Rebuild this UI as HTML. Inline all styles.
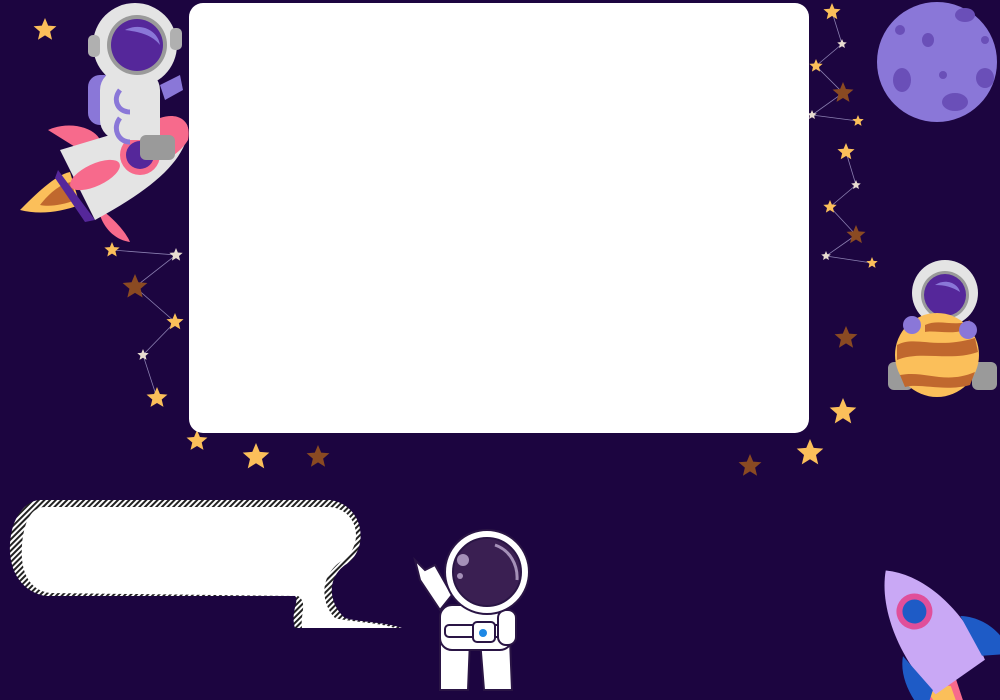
<!DOCTYPE html>
<html><head><style>
html,body{margin:0;padding:0;background:#1c0540;width:1000px;height:700px;overflow:hidden}
svg{display:block;position:absolute;left:0;top:0}
</style></head><body>
<svg width="1000" height="700" viewBox="0 0 1000 700" xmlns="http://www.w3.org/2000/svg">
<defs>
<path id="s" d="M0,-10 L2.65,-3.64 9.51,-3.09 4.28,1.39 5.88,8.09 0,4.5 -5.88,8.09 -4.28,1.39 -9.51,-3.09 -2.65,-3.64Z"/>
<pattern id="h" width="4" height="4" patternUnits="userSpaceOnUse" patternTransform="rotate(45)"><rect width="4" height="4" fill="#fff"/><rect width="2" height="4" fill="#222"/></pattern>
</defs>
<rect width="1000" height="700" fill="#1c0540"/>
<g stroke="#8a7fb0" stroke-width="0.8" fill="none">
<polyline points="112,250 176,255 135,287 175,322 143,355 157,398"/>
<polyline points="832,12 842,44 816,66 843,93 812,115 858,121"/>
<polyline points="846,152 856,185 830,207 856,235 826,256 872,263"/>
</g>
<g fill="#fbbf5a">
<use href="#s" transform="translate(45,30) scale(1.2)"/>
<use href="#s" transform="translate(112,250) scale(0.8)"/>
<use href="#s" transform="translate(175,322) scale(0.9)"/>
<use href="#s" transform="translate(157,398) scale(1.1)"/>
<use href="#s" transform="translate(197,441) scale(1.1)"/>
<use href="#s" transform="translate(256,457) scale(1.4)"/>
<use href="#s" transform="translate(832,12) scale(0.9)"/>
<use href="#s" transform="translate(816,66) scale(0.7)"/>
<use href="#s" transform="translate(858,121) scale(0.6)"/>
<use href="#s" transform="translate(846,152) scale(0.9)"/>
<use href="#s" transform="translate(830,207) scale(0.7)"/>
<use href="#s" transform="translate(872,263) scale(0.6)"/>
<use href="#s" transform="translate(843,412) scale(1.4)"/>
<use href="#s" transform="translate(810,453) scale(1.4)"/>
</g>
<g fill="#e8dcd0">
<use href="#s" transform="translate(176,255) scale(0.7)"/>
<use href="#s" transform="translate(143,355) scale(0.6)"/>
<use href="#s" transform="translate(842,44) scale(0.5)"/>
<use href="#s" transform="translate(812,115) scale(0.5)"/>
<use href="#s" transform="translate(856,185) scale(0.5)"/>
<use href="#s" transform="translate(826,256) scale(0.5)"/>
</g>
<g fill="#8a4a22">
<use href="#s" transform="translate(135,287) scale(1.3)"/>
<use href="#s" transform="translate(318,457) scale(1.2)"/>
<use href="#s" transform="translate(843,93) scale(1.1)"/>
<use href="#s" transform="translate(856,235) scale(1.0)"/>
<use href="#s" transform="translate(846,338) scale(1.2)"/>
<use href="#s" transform="translate(750,466) scale(1.2)"/>
</g>
<rect x="189" y="3" width="620" height="430" rx="14" fill="#fff"/>
<g>
<path d="M20,210 C35,195 55,175 70,172 L80,205 C60,212 40,215 20,210Z" fill="#fbbf5a"/>
<path d="M40,205 C50,192 62,183 72,182 L76,200 C62,205 50,207 40,205Z" fill="#c0682e"/>
<path d="M48,130 C70,120 95,128 100,140 L80,150Z" fill="#f76a8c"/>
<path d="M95,205 C110,215 125,230 130,242 C115,240 104,228 100,215Z" fill="#f76a8c"/>
<path d="M60,150 L160,120 C180,115 190,120 188,135 C180,165 150,190 95,220 Z" fill="#e4e4e4"/>
<path d="M58,170 L95,220 L85,222 L55,178Z" fill="#55279a"/>
<ellipse cx="95" cy="175" rx="27" ry="11" transform="rotate(-25 95 175)" fill="#f76a8c"/>
<path d="M160,118 C178,112 192,120 188,140 C182,150 170,160 160,160Z" fill="#f76a8c"/>
<circle cx="140" cy="155" r="20" fill="#f76a8c"/><circle cx="140" cy="155" r="14" fill="#55279a"/>
<rect x="88" y="75" width="28" height="50" rx="12" fill="#8a77d8"/>
<rect x="100" y="70" width="60" height="70" rx="20" fill="#e4e4e4"/>
<path d="M120,90 C112,100 118,112 130,112" stroke="#8a77d8" stroke-width="5" fill="none"/>
<path d="M120,118 C112,128 118,142 130,142" stroke="#8a77d8" stroke-width="5" fill="none"/>
<path d="M160,85 L180,75 L183,90 L165,100Z" fill="#8a77d8"/>
<rect x="140" y="135" width="35" height="25" rx="6" fill="#9a9a9a"/>
<circle cx="135" cy="45" r="42" fill="#e4e4e4"/>
<rect x="88" y="35" width="12" height="22" rx="5" fill="#b0b0b0"/>
<rect x="170" y="28" width="12" height="22" rx="5" fill="#b0b0b0"/>
<circle cx="137" cy="45" r="30" fill="#9a9a9a"/>
<circle cx="137" cy="45" r="26" fill="#55279a"/>
<path d="M125,30 C140,22 158,30 160,45 C152,35 140,32 125,30Z" fill="#8a77d8"/>
</g>
<circle cx="937" cy="62" r="60" fill="#8a77d8"/>
<g fill="#6a4fb8">
<ellipse cx="902" cy="80" rx="9" ry="12"/><ellipse cx="955" cy="102" rx="13" ry="9"/>
<ellipse cx="985" cy="78" rx="9" ry="10"/><ellipse cx="928" cy="40" rx="6" ry="7"/>
<ellipse cx="965" cy="15" rx="10" ry="7"/><ellipse cx="900" cy="30" rx="5" ry="5"/>
<ellipse cx="943" cy="75" rx="4" ry="4"/><ellipse cx="985" cy="40" rx="4" ry="4"/>
</g>
<g>
<circle cx="945" cy="293" r="33" fill="#e4e4e4"/>
<circle cx="945" cy="295" r="24" fill="#9a9a9a"/>
<circle cx="945" cy="295" r="21" fill="#55279a"/>
<path d="M935,285 C945,278 958,283 960,292 C952,287 945,285 935,285Z" fill="#8a77d8"/>
<rect x="888" y="362" width="25" height="28" rx="6" fill="#9a9a9a"/>
<rect x="972" y="362" width="25" height="28" rx="6" fill="#9a9a9a"/>
<circle cx="937" cy="355" r="42" fill="#fbbf5a"/>
<path d="M897,345 C915,335 935,350 975,338 L978,352 C950,362 920,350 897,360Z" fill="#c0682e"/>
<path d="M900,375 C925,370 945,385 975,372 L970,385 C945,392 920,383 905,387Z" fill="#c0682e"/>
<path d="M925,325 C940,318 955,328 970,320 L965,330 C950,335 935,330 925,332Z" fill="#c0682e"/>
<circle cx="912" cy="325" r="9" fill="#8a77d8"/><circle cx="968" cy="330" r="9" fill="#8a77d8"/>
</g>
<path d="M40,500 L330,500 C365,505 370,550 345,565 C325,580 330,605 345,618 C358,622 385,622 402,628 L295,628 C290,612 300,600 295,596 L45,596 C15,590 5,560 12,530 C17,510 30,500 40,500Z" fill="url(#h)"/>
<path d="M45,507 L330,507 C360,510 365,548 340,562 C318,578 322,605 335,618 C350,622 375,622 395,628 L302,628 C300,615 308,602 298,596 L50,593 C28,590 20,570 22,545 C24,520 32,507 45,507Z" fill="#fff"/>
<g stroke="#2a1545" stroke-width="2">
<path d="M440,640 L470,640 L468,690 L440,690Z" fill="#fff"/>
<path d="M480,640 L510,640 L512,690 L484,690Z" fill="#fff"/>
<rect x="440" y="605" width="72" height="45" rx="12" fill="#fff"/>
<rect x="445" y="625" width="60" height="12" rx="4" fill="#fff"/>
<rect x="473" y="622" width="22" height="20" rx="4" fill="#fff"/>
<path d="M440,610 L420,580 L415,560 L425,570 L435,565 L452,595Z" fill="#fff"/>
<rect x="498" y="610" width="18" height="35" rx="8" fill="#fff"/>
<circle cx="487" cy="572" r="42" fill="#fff"/>
<circle cx="487" cy="572" r="34" fill="#3a1f52"/>
</g>
<circle cx="483" cy="633" r="4" fill="#1e88e5"/>
<circle cx="463" cy="560" r="6" fill="#a590b8"/><circle cx="460" cy="576" r="3" fill="#a590b8"/>
<path d="M495,545 C510,550 518,565 517,580" stroke="#a590b8" stroke-width="3" fill="none"/>
<g transform="translate(930,625) rotate(-35)">
<path d="M-40,40 C-55,70 -40,100 -25,110 L-10,60Z" fill="#f76a8c"/>
<path d="M-38,45 C-45,70 -35,90 -28,98 L-18,62Z" fill="#fbbf5a"/>
<path d="M-5,-70 C30,-40 35,20 25,60 L-35,60 C-45,20 -35,-40 -5,-70Z" fill="#c9a8f5"/>
<path d="M30,10 C50,25 55,50 50,70 L25,55Z" fill="#1e5bc6"/>
<path d="M-40,10 C-55,25 -58,50 -55,70 L-35,55Z" fill="#1e5bc6"/>
<circle cx="-5" cy="-20" r="18" fill="#e04f9a"/>
<circle cx="-5" cy="-20" r="12" fill="#1e5bc6"/>
</g>
</svg>
</body></html>
